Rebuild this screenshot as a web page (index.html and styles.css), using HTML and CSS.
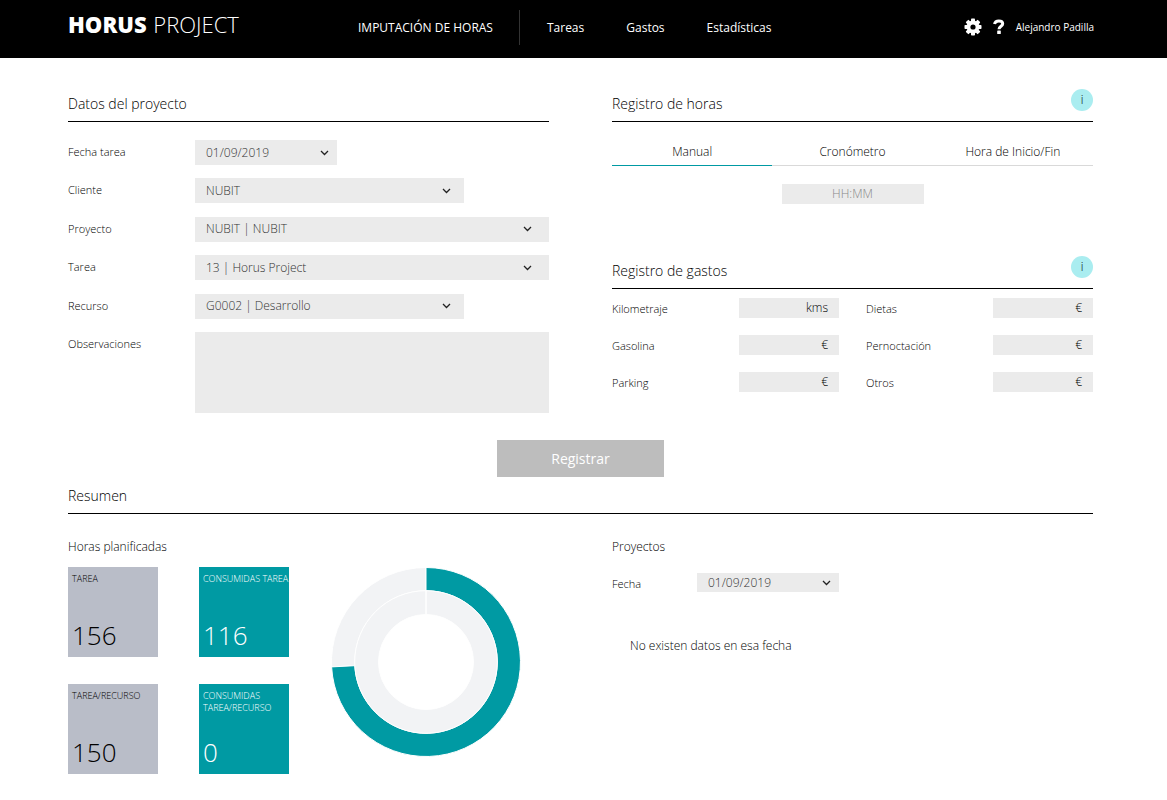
FILE: index.html
```html
<!DOCTYPE html>
<html lang="es">
<head>
  <meta charset="utf-8">
  <title>Horus Project</title>
  <link rel="stylesheet" href="styles.css">
</head>
<body>
<header class="topbar">
  <a href="#" class="brand"><b>HORUS</b> PROJECT</a>
  <nav class="menu">
    <a href="#" class="active">IMPUTACIÓN DE HORAS</a>
    <a href="#">Tareas</a>
    <a href="#">Gastos</a>
    <a href="#">Estadísticas</a>
  </nav>
  <div class="user">
    <button type="button" class="icon-btn" aria-label="Configuración">
      <svg width="18" height="18" viewBox="-9 -9 18 18">
        <g fill="#fff">
          <rect x="-2" y="-8.500" width="4" height="17" rx="0.800"/>
          <rect x="-2" y="-8.500" width="4" height="17" rx="0.800" transform="rotate(45)"/>
          <rect x="-2" y="-8.500" width="4" height="17" rx="0.800" transform="rotate(90)"/>
          <rect x="-2" y="-8.500" width="4" height="17" rx="0.800" transform="rotate(135)"/>
          <circle r="6.500"/>
        </g>
        <circle r="2.600"/>
      </svg>
    </button>
    <button type="button" class="icon-btn" aria-label="Ayuda">
      <svg width="12" height="16" viewBox="0 0 12 16"><path fill="none" stroke="#fff" stroke-width="3" d="M1.500 5C2 2.700 3.600 1.900 5.800 1.900c2.400 0 3.900 1 3.900 2.800 0 2.500-3.700 2.600-3.700 5.600"/><rect x="4.200" y="11.500" width="3.600" height="3.500" rx="0.600" fill="#fff"/></svg>
    </button>
    <a href="#" class="user-name">Alejandro Padilla</a>
  </div>
</header>

<main class="page">
  <form>
    <div class="columns">
      <section>
        <div class="section-head"><h2>Datos del proyecto</h2></div>
        <div class="project-form">
          <div class="field">
            <label for="fechaTarea">Fecha tarea</label>
            <select id="fechaTarea" class="date"><option>01/09/2019</option></select>
          </div>
          <div class="field">
            <label for="cliente">Cliente</label>
            <select id="cliente" class="medium"><option>NUBIT</option></select>
          </div>
          <div class="field">
            <label for="proyecto">Proyecto</label>
            <select id="proyecto"><option>NUBIT | NUBIT</option></select>
          </div>
          <div class="field">
            <label for="tarea">Tarea</label>
            <select id="tarea"><option>13 | Horus Project</option></select>
          </div>
          <div class="field">
            <label for="recurso">Recurso</label>
            <select id="recurso" class="medium"><option>G0002 | Desarrollo</option></select>
          </div>
          <div class="field">
            <label for="observaciones">Observaciones</label>
            <textarea id="observaciones"></textarea>
          </div>
        </div>
      </section>

      <div>
        <section class="hours">
          <div class="section-head">
            <h2>Registro de horas</h2>
            <button type="button" class="info">i</button>
          </div>
          <div class="tabs">
            <button type="button" class="tab selected">Manual</button>
            <button type="button" class="tab">Cronómetro</button>
            <button type="button" class="tab">Hora de Inicio/Fin</button>
          </div>
          <input type="text" class="time" placeholder="HH:MM" aria-label="Horas">
        </section>

        <section>
          <div class="section-head">
            <h2>Registro de gastos</h2>
            <button type="button" class="info">i</button>
          </div>
          <div class="expenses">
            <div class="expense">
              <label for="kilometraje">Kilometraje</label>
              <div class="amount"><input type="text" id="kilometraje"><span>kms</span></div>
            </div>
            <div class="expense">
              <label for="dietas">Dietas</label>
              <div class="amount"><input type="text" id="dietas"><span>€</span></div>
            </div>
            <div class="expense">
              <label for="gasolina">Gasolina</label>
              <div class="amount"><input type="text" id="gasolina"><span>€</span></div>
            </div>
            <div class="expense">
              <label for="pernoctacion">Pernoctación</label>
              <div class="amount"><input type="text" id="pernoctacion"><span>€</span></div>
            </div>
            <div class="expense">
              <label for="parking">Parking</label>
              <div class="amount"><input type="text" id="parking"><span>€</span></div>
            </div>
            <div class="expense">
              <label for="otros">Otros</label>
              <div class="amount"><input type="text" id="otros"><span>€</span></div>
            </div>
          </div>
        </section>
      </div>
    </div>
    <button type="submit" class="submit">Registrar</button>
  </form>

  <section>
    <div class="section-head"><h2>Resumen</h2></div>
    <div class="columns">
      <div>
        <h3>Horas planificadas</h3>
        <div class="planned">
          <div class="tiles">
            <div class="tile"><span>TAREA</span><strong>156</strong></div>
            <div class="tile used"><span>CONSUMIDAS TAREA</span><strong>116</strong></div>
            <div class="tile"><span>TAREA/RECURSO</span><strong>150</strong></div>
            <div class="tile used"><span>CONSUMIDAS<br>TAREA/RECURSO</span><strong>0</strong></div>
          </div>
          <svg class="donut" viewBox="-95 -95 190 190" role="img" aria-label="Horas consumidas">
            <!-- outer ring: tarea -->
            <path class="rest" d="M-94.400 4.900A94.500 94.500 0 0 1 0 -94.500V-71.300A71.300 71.300 0 0 0 -71.200 3.700Z"/>
            <path class="done" d="M0 -94.500A94.500 94.500 0 1 1 -94.400 4.900L-71.200 3.700A71.300 71.300 0 1 0 0 -71.300Z"/>
            <!-- inner ring: tarea/recurso -->
            <path class="rest" d="M0 -71.300A71.300 71.300 0 0 1 0 71.300A71.300 71.300 0 0 1 0 -71.300V-47.500A47.500 47.500 0 0 0 0 47.500A47.500 47.500 0 0 0 0 -47.500Z"/>
          </svg>
        </div>
      </div>
      <div>
        <h3>Proyectos</h3>
        <div class="filter">
          <label for="fecha">Fecha</label>
          <select id="fecha" class="date"><option>01/09/2019</option></select>
        </div>
        <p class="empty">No existen datos en esa fecha</p>
      </div>
    </div>
  </section>
</main>
</body>
</html>
```
FILE: styles.css
```css
* {
  box-sizing: border-box;
}
body {
  margin: 0;
  background: #fff;
  color: #000;
  font-family: "Segoe UI", "Open Sans", "Noto Sans", sans-serif;
  font-size: 12px;
  font-weight: 300;
  line-height: 20px;
}
a {
  color: inherit;
  text-decoration: none;
}
button, input, select, textarea {
  border: 0;
  border-radius: 0;
  margin: 0;
  padding: 0;
  font: inherit;
  color: inherit;
}
button {
  background: none;
  cursor: pointer;
}
h2, h3, p {
  margin: 0;
  font-weight: 300;
}
h2 {
  padding-top: 4px;
  font-size: 14px;
  line-height: 22px;
}
h3 {
  margin-top: 23px;
  font-size: 12px;
}
label {
  font-size: 11px;
}

/* header */
.topbar {
  display: flex;
  align-items: center;
  height: 58px;
  padding: 0 73px 4px 68px;
  background: #000;
  color: #fff;
}
.brand {
  flex: 0 0 290px;
  padding-bottom: 6px;
  font-size: 22px;
  line-height: 30px;
}
.brand b {
  margin-right: 1px;
  font-weight: 800;
}
.menu {
  display: flex;
  gap: 42px;
  font-weight: 400;
  line-height: 35px;
}
.menu .active {
  padding-right: 26px;
  margin-right: -15px;
  border-right: 1px solid #333;
}
.user {
  display: flex;
  align-items: center;
  gap: 11px;
  margin-left: auto;
}
.user-name {
  font-size: 10px;
  font-weight: 400;
}
.icon-btn {
  display: flex;
}

/* layout */
.page {
  padding: 31px 74px 26px 68px;
}
.columns {
  display: grid;
  grid-template-columns: 1fr 1fr;
  gap: 63px;
}
.section-head {
  display: flex;
  justify-content: space-between;
  align-items: flex-start;
  height: 33px;
  border-bottom: 1px solid #000;
}
.info {
  width: 22px;
  height: 22px;
  border-radius: 50%;
  background: #aaedf0;
}

/* fields */
select, input, textarea {
  display: block;
  width: 100%;
  background: #ebebeb;
}
select {
  appearance: none;
  height: 25px;
  padding: 0 30px 0 11px;
  color: #333;
  background: #ebebeb url("data:image/svg+xml,%3Csvg xmlns='http://www.w3.org/2000/svg' width='9' height='6'%3E%3Cpath d='M1 1l3.500 3.500L8 1' fill='none' stroke='%23222' stroke-width='1.300'/%3E%3C/svg%3E") no-repeat right 17px center;
}
.project-form {
  display: flex;
  flex-direction: column;
  justify-content: space-between;
  height: 273px;
  margin-top: 18px;
}
.field {
  display: grid;
  grid-template-columns: 127px 1fr;
}
.field label {
  padding-top: 2px;
}
.medium {
  width: 76%;
  background-position: right 13px center;
}
.date {
  width: 142px;
  background-position: right 8px center;
}
textarea {
  height: 81px;
  padding: 4px 11px;
  resize: none;
}

/* hours */
.hours {
  margin-bottom: 52px;
}
.tabs {
  display: flex;
}
.tab {
  flex: 1;
  padding: 20px 0 3px;
  border-bottom: 1px solid #d9d9d9;
}
.tab.selected {
  border-color: #009aa3;
}
.time {
  width: 142px;
  height: 20px;
  margin: 18px auto 0;
  text-align: center;
}
.time::placeholder {
  color: #888;
}

/* expenses */
.expenses {
  display: grid;
  grid-template-columns: 1fr 1fr;
  gap: 16px 27px;
  margin-top: 9px;
}
.expense {
  display: grid;
  grid-template-columns: 127px 1fr;
}
.expense label {
  padding-top: 1px;
}
.amount {
  display: flex;
  height: 20px;
  padding-right: 11px;
  background: #ebebeb;
}
.amount input {
  min-width: 0;
  flex: 1;
}

.submit {
  display: block;
  width: 167px;
  margin: 27px auto 4px;
  background: #bdbdbd;
  color: #fff;
  font-size: 14px;
  font-weight: 400;
  line-height: 37px;
}

/* summary */
.planned {
  display: flex;
  gap: 42px;
  margin-top: 10px;
}
.tiles {
  display: grid;
  grid-template-columns: 90px 90px;
  gap: 27px 41px;
}
.tile {
  display: flex;
  flex-direction: column;
  justify-content: space-between;
  height: 90px;
  padding: 6px 0 6px 4px;
  background: #b9bdc8;
  font-size: 9px;
  line-height: 12px;
  white-space: nowrap;
}
.tile strong {
  font-size: 26px;
  font-weight: 300;
  line-height: 32px;
}
.tile.used {
  background: #009aa3;
  color: #fff;
}
.donut {
  width: 190px;
  height: 190px;
}
.donut path {
  stroke: #fff;
  stroke-width: 1;
}
.donut .rest {
  fill: #f2f3f5;
}
.donut .done {
  fill: #009aa3;
}
.filter {
  display: grid;
  grid-template-columns: 85px 142px;
  margin-top: 16px;
}
.filter select {
  height: 19px;
}
.filter label {
  padding-top: 1px;
}
.empty {
  margin: 42px 0 0 18px;
}
```
